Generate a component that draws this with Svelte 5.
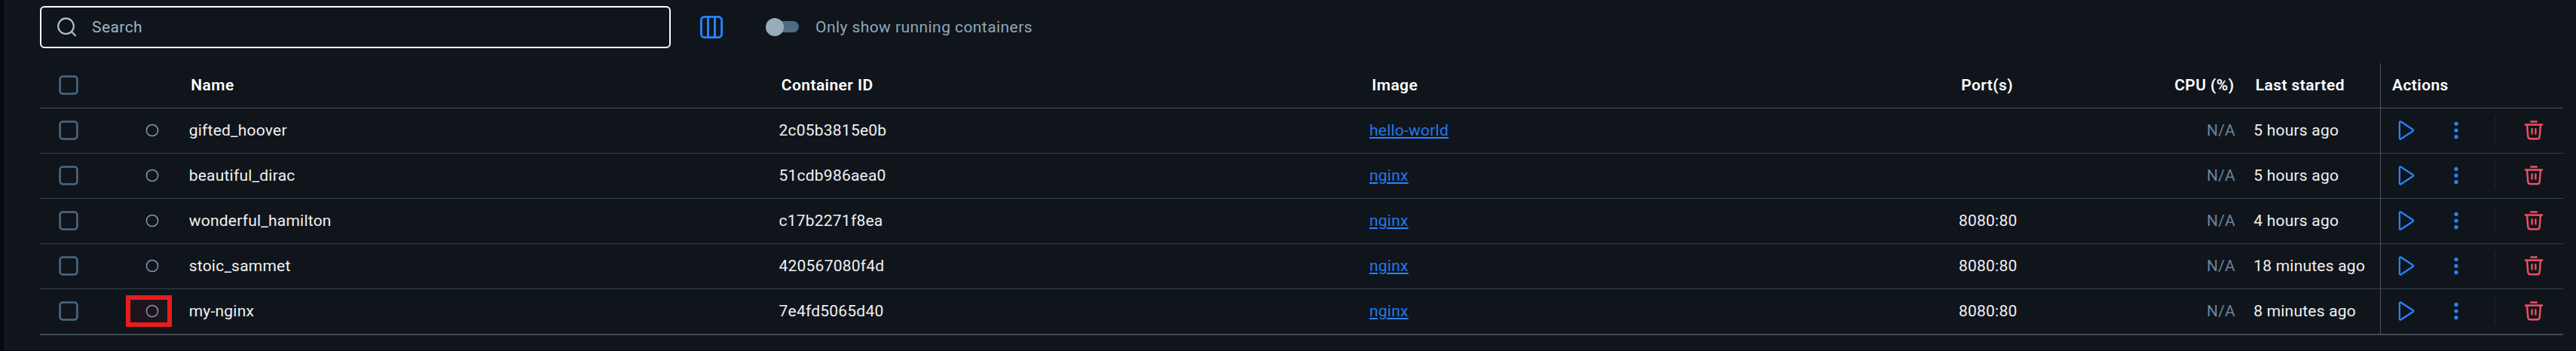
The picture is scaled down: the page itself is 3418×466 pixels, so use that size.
<script>
  const rows = [
    { name: 'gifted_hoover', id: '2c05b3815e0b', image: 'hello-world', ports: '', started: '5 hours ago' },
    { name: 'beautiful_dirac', id: '51cdb986aea0', image: 'nginx', ports: '', started: '5 hours ago' },
    { name: 'wonderful_hamilton', id: 'c17b2271f8ea', image: 'nginx', ports: '8080:80', started: '4 hours ago' },
    { name: 'stoic_sammet', id: '420567080f4d', image: 'nginx', ports: '8080:80', started: '18 minutes ago' },
    { name: 'my-nginx', id: '7e4fd5065d40', image: 'nginx', ports: '8080:80', started: '8 minutes ago', marked: true }
  ];
</script>

{#snippet checkbox()}
  <svg class="box" width="26" height="26" viewBox="0 0 26 26"><rect x="1.6" y="1.6" width="22.8" height="22.8" rx="3.6" /></svg>
{/snippet}

<main class="panel">
  <div class="toolbar">
    <div class="search">
      <svg class="lens" width="28" height="28" viewBox="0 0 28 28"><circle cx="12.5" cy="12.7" r="10.3" /><path d="M19.8 20 25 25.2" /></svg>
      <span>Search</span>
    </div>
    <svg class="columns" width="30" height="30" viewBox="0 0 30 30"><rect x="1.4" y="1.4" width="27.2" height="27.2" rx="4.6" /><path d="M10.5 1v28M19.5 1v28" /></svg>
    <div class="switch"><div class="track"></div><div class="knob"></div></div>
    <span class="switch-label">Only show running containers</span>
  </div>

  <div class="table">
    <div class="row head">
      <div class="cell check">{@render checkbox()}</div>
      <div class="cell status"></div>
      <div class="cell">Name</div>
      <div class="cell">Container ID</div>
      <div class="cell">Image</div>
      <div class="cell">Port(s)</div>
      <div class="cell cpu">CPU (%)</div>
      <div class="cell">Last started</div>
      <div class="cell actions">Actions</div>
    </div>
    {#each rows as row}
      <div class="row">
        <div class="cell check">{@render checkbox()}</div>
        <div class="cell status">
          <svg class="dot" width="18" height="18" viewBox="0 0 18 18"><circle cx="9" cy="9" r="7.6" /></svg>
          {#if row.marked}<span class="marker"></span>{/if}
        </div>
        <div class="cell name">{row.name}</div>
        <div class="cell">{row.id}</div>
        <div class="cell"><a href="#image">{row.image}</a></div>
        <div class="cell">{row.ports}</div>
        <div class="cell cpu muted">N/A</div>
        <div class="cell started">{row.started}</div>
        <div class="cell actions">
          <svg class="play" width="24" height="30" viewBox="0 0 24 30"><path d="M2.9 4.5v21c0 1 .9 1.5 1.7 1L20.6 16c.8-.5.8-1.5 0-2L4.6 3.5c-.8-.5-1.7 0-1.7 1z" /></svg>
          <svg class="more" width="10" height="26" viewBox="0 0 10 26"><circle cx="5" cy="4.3" r="2.6" /><circle cx="5" cy="13" r="2.6" /><circle cx="5" cy="21.7" r="2.6" /></svg>
          <span class="divider"></span>
          <svg class="trash" width="26" height="28" viewBox="0 0 26 28"><path d="M9.2 2.5h7.6M1.9 6.5h22.2M4 6.7 5.3 22.4c.2 1.9 1.3 2.9 3 2.9h9.4c1.7 0 2.8-1 3-2.9L22 6.7M10.6 12.2v6.2M15.4 12.2v6.2" /></svg>
        </div>
      </div>
    {/each}
  </div>
</main>

<style>
  :global(body) { background: #10151c; }
  .panel {
    box-sizing: border-box;
    width: 3418px;
    height: 466px;
    overflow: hidden;
    padding: 8px 17px 0 48px;
    border-left: 5px solid #06090b;
    border-bottom: 1px solid #0a0d12;
    background: #10151c;
    color: #f0f0f0;
    font: 400 21px/30px Roboto, sans-serif;
    letter-spacing: 0.01071em;
  }
  .toolbar { display: flex; align-items: center; height: 56px; letter-spacing: 0.43px; }
  .search {
    box-sizing: border-box;
    display: flex;
    align-items: center;
    width: 837px;
    height: 56px;
    padding-left: 21px;
    border: 2px solid #fff;
    border-radius: 6px;
    color: #9db4c3;
  }
  .lens { margin: 0 19px 0 -1px; fill: none; stroke: #b1c4cf; stroke-width: 2.1; stroke-linecap: round; }
  .columns { margin-left: 39px; fill: none; stroke: #2585ff; stroke-width: 2.9; }
  .switch { position: relative; width: 44px; height: 24px; margin-left: 57px; }
  .track { width: 38px; height: 15px; margin: 4px 0 0 6px; border-radius: 8px; background: #4f6b82; }
  .knob { position: absolute; left: 0; top: 0; width: 24px; height: 24px; border-radius: 50%; background: #98adbc; }
  .switch-label { margin-left: 22px; color: #8fa8ba; }
  .table { margin-top: 20px; border-bottom: 1px solid #525454; }
  .row {
    display: grid;
    grid-template-columns: 76px 121px 783.5px 783.5px 782px 203.5px 187px 168.5px 243px;
    height: 60px;
  }
  .cell {
    box-sizing: border-box;
    display: flex;
    align-items: center;
    height: 60px;
    padding-bottom: 1px;
    border-bottom: 1px solid #314350;
    white-space: nowrap;
  }
  .head .cell { padding-left: 3.3px; border-bottom-color: #525454; color: #fff; font-weight: 600; letter-spacing: 0.42px; }
  .cell.check, .head .cell.check { padding-left: 25px; }
  .box { fill: none; stroke: #4c6a83; stroke-width: 2.5; }
  .status { position: relative; padding-left: 64px; }
  .dot { fill: none; stroke: #7d99b1; stroke-width: 1.5; }
  .name, .started { padding-left: 0.7px; }
  .marker { position: absolute; left: 38px; top: 8px; box-sizing: border-box; width: 61px; height: 42px; border: 6px solid #e71d1d; background: rgba(231, 29, 29, 0.06); }
  a { color: #2479e8; text-decoration: underline 2px #2585ff; text-underline-offset: 2px; }
  .cpu { justify-content: flex-end; padding-right: 23.5px; }
  .head .cpu { padding-right: 25px; }
  .muted { color: #67839b; }
  .actions { border-left: 1px solid #525454; }
  .head .cell.actions { padding-left: 15px; }
  .play { margin-left: 22px; fill: none; stroke: #2585ff; stroke-width: 2.2; }
  .more { margin-left: 49px; fill: #2585ff; }
  .divider { width: 1px; height: 36px; margin-left: 46px; background: #20262d; }
  .trash { margin-left: 38px; fill: none; stroke: #ee5063; stroke-width: 2.4; stroke-linecap: round; }
</style>
